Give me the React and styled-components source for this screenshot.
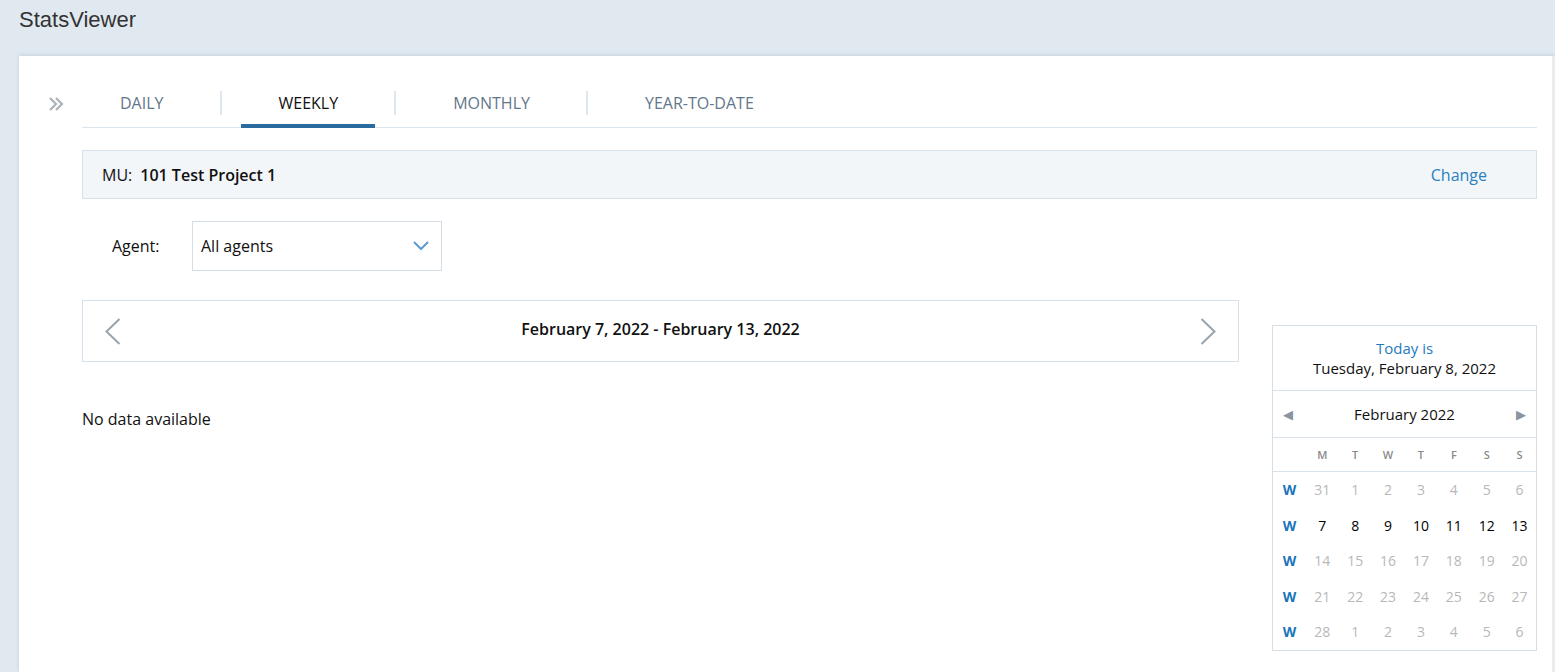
import React, { useState } from 'react'
import styled, { createGlobalStyle } from 'styled-components'

const GlobalStyle = createGlobalStyle`
  html, body {
    margin: 0;
    padding: 0;
    background: #e0e9f0;
    font-family: "Open Sans", "Noto Sans", sans-serif;
    color: #111;
    overflow: hidden;
  }
`

const Page = styled.div`
  width: 1555px;
  height: 672px;
  display: flex;
  flex-direction: column;
`

const Header = styled.header`
  height: 56px;
  padding: 8px 0 0 19px;
  box-sizing: border-box;
  font-family: "Liberation Sans", Arial, sans-serif;
  font-size: 22px;
  line-height: 24px;
  color: #333;
`

const Card = styled.div`
  flex: 1;
  margin-left: 19px;
  background: #fff;
  display: flex;
  box-shadow: 0 -1px 4px rgba(60, 80, 100, 0.15);
  border-right: 3px solid #ececec;
`

const Sidebar = styled.div`
  width: 63px;
  flex-shrink: 0;
  padding: 38px 0 0 29px;
  box-sizing: border-box;
`

const Main = styled.div`
  flex: 1;
  padding: 24px 15px 0 0;
  min-width: 0;
`

const TabBar = styled.div`
  display: flex;
  align-items: flex-start;
  border-bottom: 1px solid #dde5ec;
  height: 47px;
`

const Tab = styled.button`
  height: 48px;
  padding: 2px 37px 0 38px;
  border: 0;
  border-bottom: 4px solid ${p => (p.$active ? '#2a6a9c' : 'transparent')};
  background: none;
  font-family: "Open Sans", sans-serif;
  font-size: 16px;
  color: ${p => (p.$active ? '#111' : '#62778a')};
  cursor: pointer;
  box-sizing: border-box;
`

const TabDivider = styled.span`
  width: 2px;
  height: 24px;
  margin: 11px 19px 0;
  background: #dce7f1;
`

const MuBar = styled.div`
  margin-top: 22px;
  height: 49px;
  box-sizing: border-box;
  border: 1px solid #d5e1eb;
  background: #f3f6f9;
  display: flex;
  align-items: center;
  padding: 0 49px 0 19px;
  font-size: 16px;
`

const MuLabel = styled.span`
  margin-right: 8px;
`

const MuName = styled.span`
  font-weight: 600;
  flex: 1;
`

const ChangeLink = styled.a`
  color: #2a80c0;
  font-size: 16px;
  cursor: pointer;
`

const AgentRow = styled.div`
  margin-top: 22px;
  display: flex;
  align-items: center;
  padding-left: 30px;
`

const AgentLabel = styled.label`
  width: 80px;
  font-size: 16px;
`

const Select = styled.div`
  width: 250px;
  height: 50px;
  box-sizing: border-box;
  border: 1px solid #d4dde5;
  display: flex;
  align-items: center;
  justify-content: space-between;
  padding: 0 12px 0 8px;
  font-size: 16px;
`

const ContentRow = styled.div`
  margin-top: 29px;
  display: flex;
  gap: 33px;
  align-items: flex-start;
`

const LeftCol = styled.div`
  flex: 1;
`

const DateNav = styled.div`
  height: 62px;
  box-sizing: border-box;
  border: 1px solid #d5e1eb;
  display: flex;
  align-items: center;
  justify-content: space-between;
  padding: 0 22px;
`

const DateText = styled.div`
  font-size: 16px;
  font-weight: 600;
  margin-top: -4px;
`

const NavArrow = styled.button`
  border: 0;
  background: none;
  padding: 0;
  display: flex;
  cursor: pointer;
`

const Empty = styled.div`
  margin-top: 46px;
  font-size: 16px;
`

const Calendar = styled.div`
  margin-top: 25px;
  width: 265px;
  box-sizing: border-box;
  border: 1px solid #d5dfe8;
  flex-shrink: 0;
`

const TodayBox = styled.div`
  padding: 12px 0 12px;
  text-align: center;
  font-size: 15px;
  line-height: 20px;
  border-bottom: 1px solid #d9e2ea;
`

const TodayLabel = styled.div`
  color: #1f7ac2;
`

const MonthRow = styled.div`
  height: 46px;
  display: flex;
  align-items: center;
  justify-content: space-between;
  padding: 0 10px 0 10px;
  border-bottom: 1px solid #d9e2ea;
  font-size: 15px;
`

const Triangle = styled.span`
  font-size: 13px;
  color: #8895a1;
  cursor: pointer;
`

const Grid = styled.div`
  display: grid;
  grid-template-columns: repeat(8, 1fr);
  grid-auto-rows: ${p => p.$row};
  border-bottom: ${p => (p.$divider ? '1px solid #d9e2ea' : '0')};
  align-items: center;
  justify-items: center;
`

const DayHead = styled.span`
  font-size: 11px;
  font-weight: 600;
  color: #8a8a8a;
`

const Cell = styled.span`
  font-size: 14px;
  color: ${p => (p.$week ? '#1b75bb' : p.$current ? '#000' : '#b8b8b8')};
  font-weight: ${p => (p.$week ? 700 : 400)};
`

const DoubleChevron = () => (
  <svg width="16" height="14" viewBox="0 0 16 14">
    <polyline points="2,1 8,7 2,13" fill="none" stroke="#aab3ba" strokeWidth="2.2" />
    <polyline points="8,1 14,7 8,13" fill="none" stroke="#aab3ba" strokeWidth="2.2" />
  </svg>
)

const ChevronDown = () => (
  <svg width="16" height="10" viewBox="0 0 16 10">
    <polyline points="1,1 8,8 15,1" fill="none" stroke="#5a9bd0" strokeWidth="2" />
  </svg>
)

const Chevron = ({ dir }) => (
  <svg width="16" height="27" viewBox="0 0 16 27">
    <polyline
      points={dir === 'left' ? '14.5,1 1.5,13.5 14.5,26' : '1.5,1 14.5,13.5 1.5,26'}
      fill="none"
      stroke="#98a5ae"
      strokeWidth="2"
    />
  </svg>
)

const tabs = ['DAILY', 'WEEKLY', 'MONTHLY', 'YEAR-TO-DATE']
const days = ['M', 'T', 'W', 'T', 'F', 'S', 'S']
const weeks = [
  [31, 1, 2, 3, 4, 5, 6],
  [7, 8, 9, 10, 11, 12, 13],
  [14, 15, 16, 17, 18, 19, 20],
  [21, 22, 23, 24, 25, 26, 27],
  [28, 1, 2, 3, 4, 5, 6],
]

const App = () => {
  const [active, setActive] = useState('WEEKLY')

  return (
    <Page>
      <GlobalStyle />
      <Header>StatsViewer</Header>
      <Card>
        <Sidebar>
          <DoubleChevron />
        </Sidebar>
        <Main>
          <TabBar>
            {tabs.map((t, i) => (
              <React.Fragment key={t}>
                {i > 0 && <TabDivider />}
                <Tab $active={active === t} onClick={() => setActive(t)}>{t}</Tab>
              </React.Fragment>
            ))}
          </TabBar>

          <MuBar>
            <MuLabel>MU:</MuLabel>
            <MuName>101 Test Project 1</MuName>
            <ChangeLink>Change</ChangeLink>
          </MuBar>

          <AgentRow>
            <AgentLabel>Agent:</AgentLabel>
            <Select>
              <span>All agents</span>
              <ChevronDown />
            </Select>
          </AgentRow>

          <ContentRow>
            <LeftCol>
              <DateNav>
                <NavArrow><Chevron dir="left" /></NavArrow>
                <DateText>February 7, 2022 - February 13, 2022</DateText>
                <NavArrow><Chevron dir="right" /></NavArrow>
              </DateNav>
              <Empty>No data available</Empty>
            </LeftCol>

            <Calendar>
              <TodayBox>
                <TodayLabel>Today is</TodayLabel>
                <div>Tuesday, February 8, 2022</div>
              </TodayBox>
              <MonthRow>
                <Triangle>◀</Triangle>
                <span>February 2022</span>
                <Triangle>▶</Triangle>
              </MonthRow>
              <Grid $row="33px" $divider>
                <span />
                {days.map((d, i) => <DayHead key={i}>{d}</DayHead>)}
              </Grid>
              <Grid $row="35.5px">
                {weeks.map((w, wi) => (
                  <React.Fragment key={wi}>
                    <Cell $week>W</Cell>
                    {w.map((d, di) => (
                      <Cell key={di} $current={wi === 1}>{d}</Cell>
                    ))}
                  </React.Fragment>
                ))}
              </Grid>
            </Calendar>
          </ContentRow>
        </Main>
      </Card>
    </Page>
  )
}

export default App
